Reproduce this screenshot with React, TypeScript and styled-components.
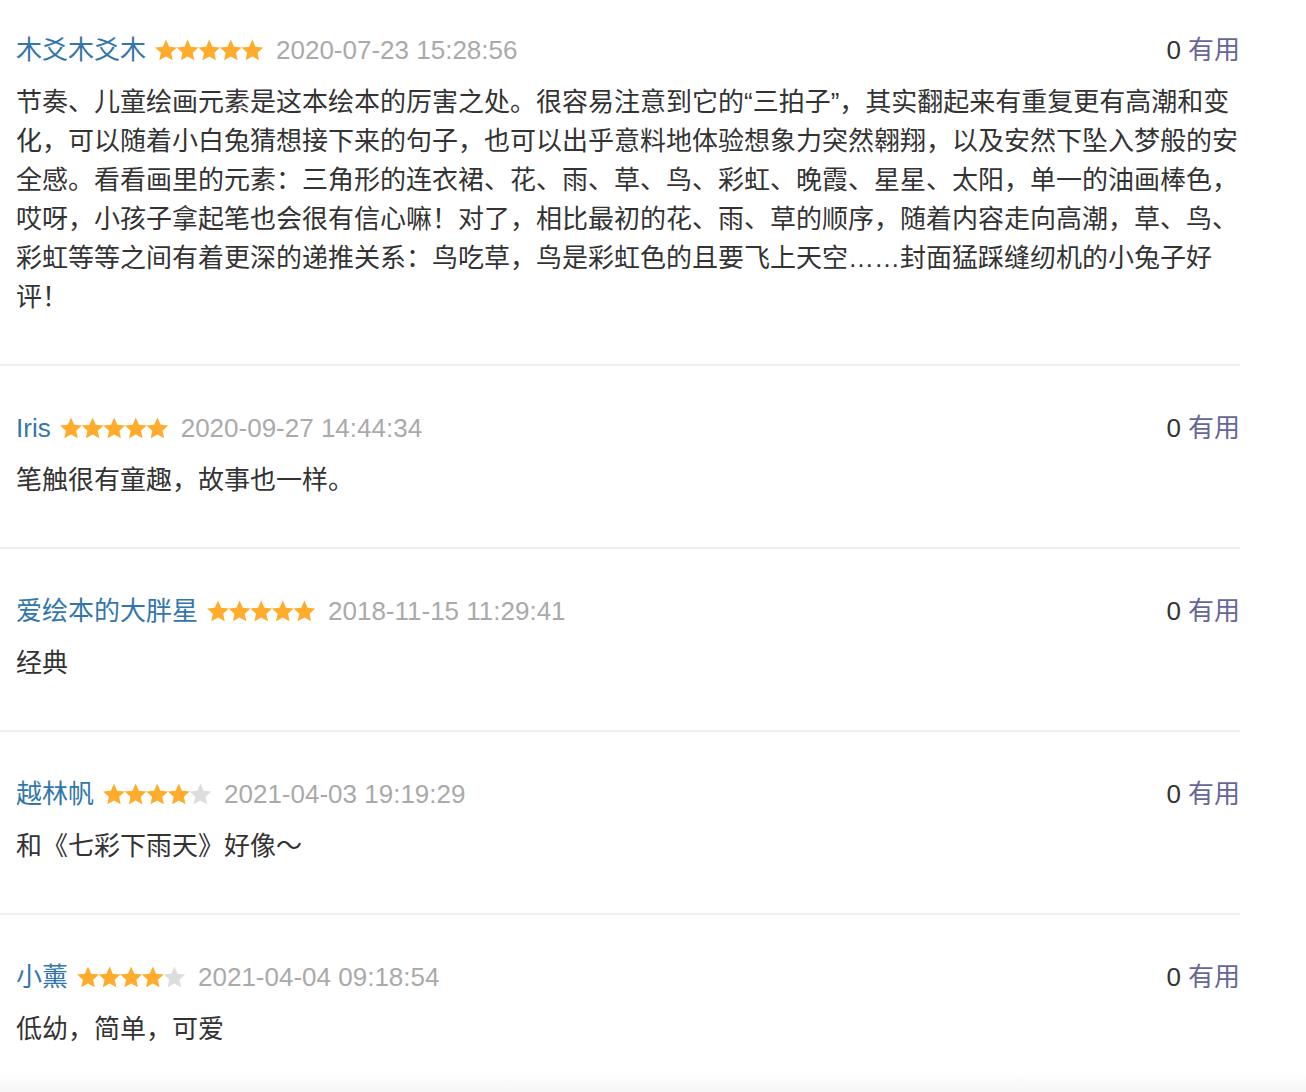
import React from "react"
import styled, { createGlobalStyle } from "styled-components"

interface Comment {
  id: number
  name: string
  rating: number
  time: string
  votes: number
  content: string
}

const comments: Comment[] = [
  {
    id: 1,
    name: "木爻木爻木",
    rating: 5,
    time: "2020-07-23 15:28:56",
    votes: 0,
    content:
      "节奏、儿童绘画元素是这本绘本的厉害之处。很容易注意到它的“三拍子”，其实翻起来有重复更有高潮和变化，可以随着小白兔猜想接下来的句子，也可以出乎意料地体验想象力突然翱翔，以及安然下坠入梦般的安全感。看看画里的元素：三角形的连衣裙、花、雨、草、鸟、彩虹、晚霞、星星、太阳，单一的油画棒色，哎呀，小孩子拿起笔也会很有信心嘛！对了，相比最初的花、雨、草的顺序，随着内容走向高潮，草、鸟、彩虹等等之间有着更深的递推关系：鸟吃草，鸟是彩虹色的且要飞上天空……封面猛踩缝纫机的小兔子好评！",
  },
  {
    id: 2,
    name: "Iris",
    rating: 5,
    time: "2020-09-27 14:44:34",
    votes: 0,
    content: "笔触很有童趣，故事也一样。",
  },
  {
    id: 3,
    name: "爱绘本的大胖星",
    rating: 5,
    time: "2018-11-15 11:29:41",
    votes: 0,
    content: "经典",
  },
  {
    id: 4,
    name: "越林帆",
    rating: 4,
    time: "2021-04-03 19:19:29",
    votes: 0,
    content: "和《七彩下雨天》好像～",
  },
  {
    id: 5,
    name: "小薰",
    rating: 4,
    time: "2021-04-04 09:18:54",
    votes: 0,
    content: "低幼，简单，可爱",
  },
]

const GlobalStyle = createGlobalStyle`
  html, body {
    margin: 0;
    padding: 0;
    background: #fff;
  }
  body {
    font-family: "Liberation Sans", "Noto Sans CJK SC", sans-serif;
    color: #333;
  }
`

const List = styled.div`
  width: 1240px;
`

const Item = styled.div`
  padding: 43px 0 47px 16px;
  border-bottom: 2px solid #efefef;

  &:first-child {
    padding-top: 31px;
  }
`

const Header = styled.div`
  display: flex;
  align-items: center;
  justify-content: space-between;
  height: 39px;
  font-size: 26px;
  line-height: 39px;
`

const Info = styled.div`
  display: flex;
  align-items: center;
`

const Name = styled.a`
  color: #3377aa;
  text-decoration: none;
  margin-right: 9px;
`

const StarRow = styled.svg`
  display: block;
  margin-right: 13px;
  transform: translateY(-1px);
`

const Time = styled.span`
  color: #aaa;
`

const Votes = styled.span`
  color: #333;
`

const Useful = styled.a`
  color: #666699;
  text-decoration: none;
  margin-left: 7px;
`

const Content = styled.p`
  margin: 13px 0 0;
  font-size: 26px;
  line-height: 39px;
  color: #333;
`

const BottomFade = styled.div`
  position: fixed;
  left: 0;
  right: 0;
  bottom: 0;
  height: 20px;
  background: linear-gradient(to bottom, rgba(255, 255, 255, 0), #f6f6f6);
  pointer-events: none;
`

// five-pointed star, outer radius 11.5, inner radius 5.4
const starPoints =
  "11,0.5 14.17,7.63 21.94,8.45 16.14,13.67 17.76,21.3 11,17.4 4.24,21.3 5.86,13.67 0.06,8.45 7.83,7.63"

const Stars = ({ rating }: { rating: number }) => (
  <StarRow width="108" height="22" viewBox="0 0 108 22">
    {[0, 1, 2, 3, 4].map((i) => (
      <polygon
        key={i}
        points={starPoints}
        transform={`translate(${i * 21.6} 0)`}
        fill={i < rating ? "#ffac2d" : "#dddddd"}
      />
    ))}
  </StarRow>
)

export default function App() {
  return (
    <>
      <GlobalStyle />
      <List>
        {comments.map((c) => (
          <Item key={c.id}>
            <Header>
              <Info>
                <Name href="#">{c.name}</Name>
                <Stars rating={c.rating} />
                <Time>{c.time}</Time>
              </Info>
              <span>
                <Votes>{c.votes}</Votes>
                <Useful href="#">有用</Useful>
              </span>
            </Header>
            <Content>{c.content}</Content>
          </Item>
        ))}
      </List>
      <BottomFade />
    </>
  )
}
